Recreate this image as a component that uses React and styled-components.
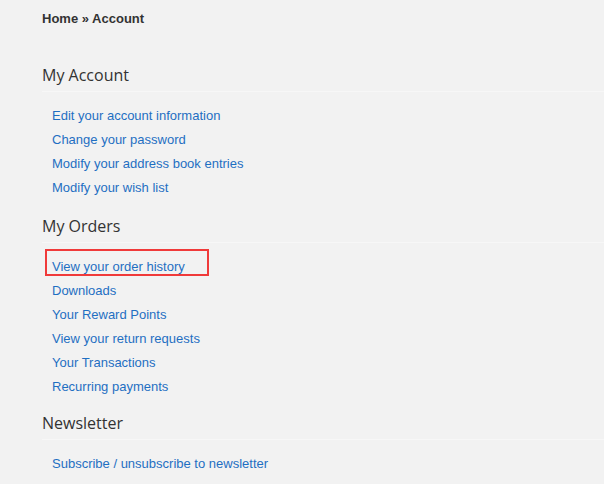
import React from 'react';
import styled, { createGlobalStyle } from 'styled-components';

const GlobalStyle = createGlobalStyle`
  html, body {
    margin: 0;
    padding: 0;
    background: #f2f2f2;
  }
  body {
    font-family: "Liberation Sans", Arial, sans-serif;
    font-size: 13px;
    color: #333;
  }
`;

const Page = styled.div`
  width: 604px;
  height: 484px;
  overflow: hidden;
  padding: 10px 0 0 42px;
  box-sizing: border-box;
`;

const Breadcrumb = styled.div`
  font-weight: bold;
  font-size: 13px;
  line-height: 18px;
  color: #333;
  margin-bottom: 37px;
`;

const Section = styled.section`
  margin-top: ${(p) => p.$gap || 0}px;
`;

const Heading = styled.h2`
  margin: 0;
  font-family: "Open Sans", sans-serif;
  font-weight: 400;
  font-size: 16px;
  line-height: 20px;
  color: #333;
  padding-bottom: 6px;
  border-bottom: 1px solid #f7f7f7;
`;

const LinkList = styled.ul`
  list-style: none;
  margin: 12px 0 0;
  padding: 0 0 0 10px;
`;

const Item = styled.li`
  position: relative;
  line-height: 24px;
  height: 24px;

  ${(p) =>
    p.$marked &&
    `
    &::after {
      content: "";
      position: absolute;
      left: -7px;
      top: -6px;
      width: 164px;
      height: 27px;
      border: 2px solid #f03a3a;
      box-sizing: border-box;
    }
  `}
`;

const Link = styled.a`
  color: #1f6fc2;
  text-decoration: none;
  font-size: 13px;
`;

const sections = [
  {
    title: 'My Account',
    gap: 0,
    links: [
      'Edit your account information',
      'Change your password',
      'Modify your address book entries',
      'Modify your wish list',
    ],
  },
  {
    title: 'My Orders',
    gap: 16,
    links: [
      'View your order history',
      'Downloads',
      'Your Reward Points',
      'View your return requests',
      'Your Transactions',
      'Recurring payments',
    ],
    marked: 'View your order history',
  },
  {
    title: 'Newsletter',
    gap: 14,
    links: ['Subscribe / unsubscribe to newsletter'],
  },
];

const App = () => {
  return (
    <>
      <GlobalStyle />
      <Page>
        <Breadcrumb>Home » Account</Breadcrumb>
        {sections.map((s) => (
          <Section key={s.title} $gap={s.gap}>
            <Heading>{s.title}</Heading>
            <LinkList>
              {s.links.map((l) => (
                <Item key={l} $marked={s.marked === l}>
                  <Link href="#">{l}</Link>
                </Item>
              ))}
            </LinkList>
          </Section>
        ))}
      </Page>
    </>
  );
};

export default App;
